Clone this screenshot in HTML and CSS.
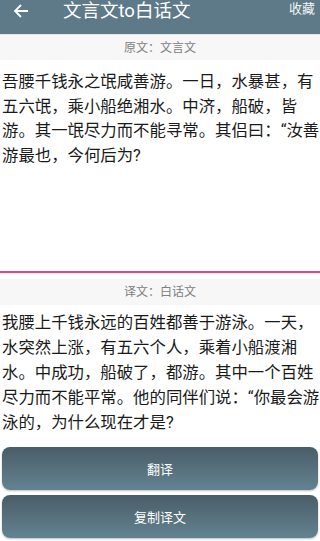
FILE: index.html
```html
<!DOCTYPE html>
<html lang="zh-CN">
<head>
    <meta charset="UTF-8">
    <meta name="viewport" content="width=device-width, initial-scale=1.0">
    <title>文言文to白话文</title>
    <link rel="stylesheet" href="styles.css">
</head>
<body>

<div class="toolbar">
    <span class="back">
        <svg width="16" height="16" viewBox="0 0 16 16">
            <path d="M15 8H2M8 2L2 8l6 6" fill="none" stroke="#fff" stroke-width="1.8"/>
        </svg>
    </span>
    <span class="title">文言文to白话文</span>
    <span class="fav">收藏</span>
</div>

<div class="band">原文：文言文</div>
<div class="source">吾腰千钱永之氓咸善游。一日，水暴甚，有五六氓，乘小船绝湘水。中济，船破，皆游。其一氓尽力而不能寻常。其侣曰：“汝善游最也，今何后为?</div>

<div class="band band-second">译文：白话文</div>
<div class="result">我腰上千钱永远的百姓都善于游泳。一天，水突然上涨，有五六个人，乘着小船渡湘水。中成功，船破了，都游。其中一个百姓尽力而不能平常。他的同伴们说：“你最会游泳的，为什么现在才是?</div>

<div class="actions">
    <button class="btn">翻译</button>
    <button class="btn">复制译文</button>
</div>

</body>
</html>
```

FILE: styles.css
```css
body {
    margin: 0;
    width: 320px;
    height: 541px;
    font-family: Roboto, "Noto Sans CJK SC", sans-serif;
    background-color: #fff;
    display: flex;
    flex-direction: column;
    overflow: hidden;
}
.toolbar {
    height: 34px;
    background-color: #5e7987;
    display: flex;
    align-items: flex-start;
    color: #fff;
    box-shadow: 0 1px 2px rgba(0, 0, 0, 0.15);
}
.back {
    display: flex;
    margin-left: 13px;
    margin-top: 3px;
}
.title {
    margin-left: 34px;
    font-size: 18.5px;
    line-height: 22px;
    margin-top: 0;
}
.fav {
    margin-left: auto;
    margin-right: 5px;
    font-size: 13px;
    line-height: 16px;
    margin-top: 1px;
    color: #f2f4f5;
}
.band {
    height: 25px;
    margin-top: 1px;
    background-color: #f7f7f7;
    color: #808080;
    font-size: 12px;
    text-align: center;
    line-height: 26px;
}
.source {
    height: 201px;
    padding: 10px 0 0 2px;
    font-size: 16.4px;
    line-height: 24.5px;
    color: #1a1a1a;
    border-bottom: 2px solid #e8467c;
}
.band-second {
    margin-top: 6px;
    height: 26px;
    line-height: 26px;
}
.result {
    height: 132px;
    padding: 5px 0 0 2px;
    font-size: 16.4px;
    line-height: 25px;
    color: #1a1a1a;
}
.actions {
    display: flex;
    flex-direction: column;
    gap: 5px;
    padding: 5px 2px 0 2px;
}
.btn {
    height: 43px;
    border: none;
    border-radius: 8px;
    background: linear-gradient(#4a5d68, #638390);
    color: #fff;
    font-family: Roboto, "Noto Sans CJK SC", sans-serif;
    font-size: 13px;
    box-shadow: 0 1px 2px rgba(0, 0, 0, 0.25);
}
```
